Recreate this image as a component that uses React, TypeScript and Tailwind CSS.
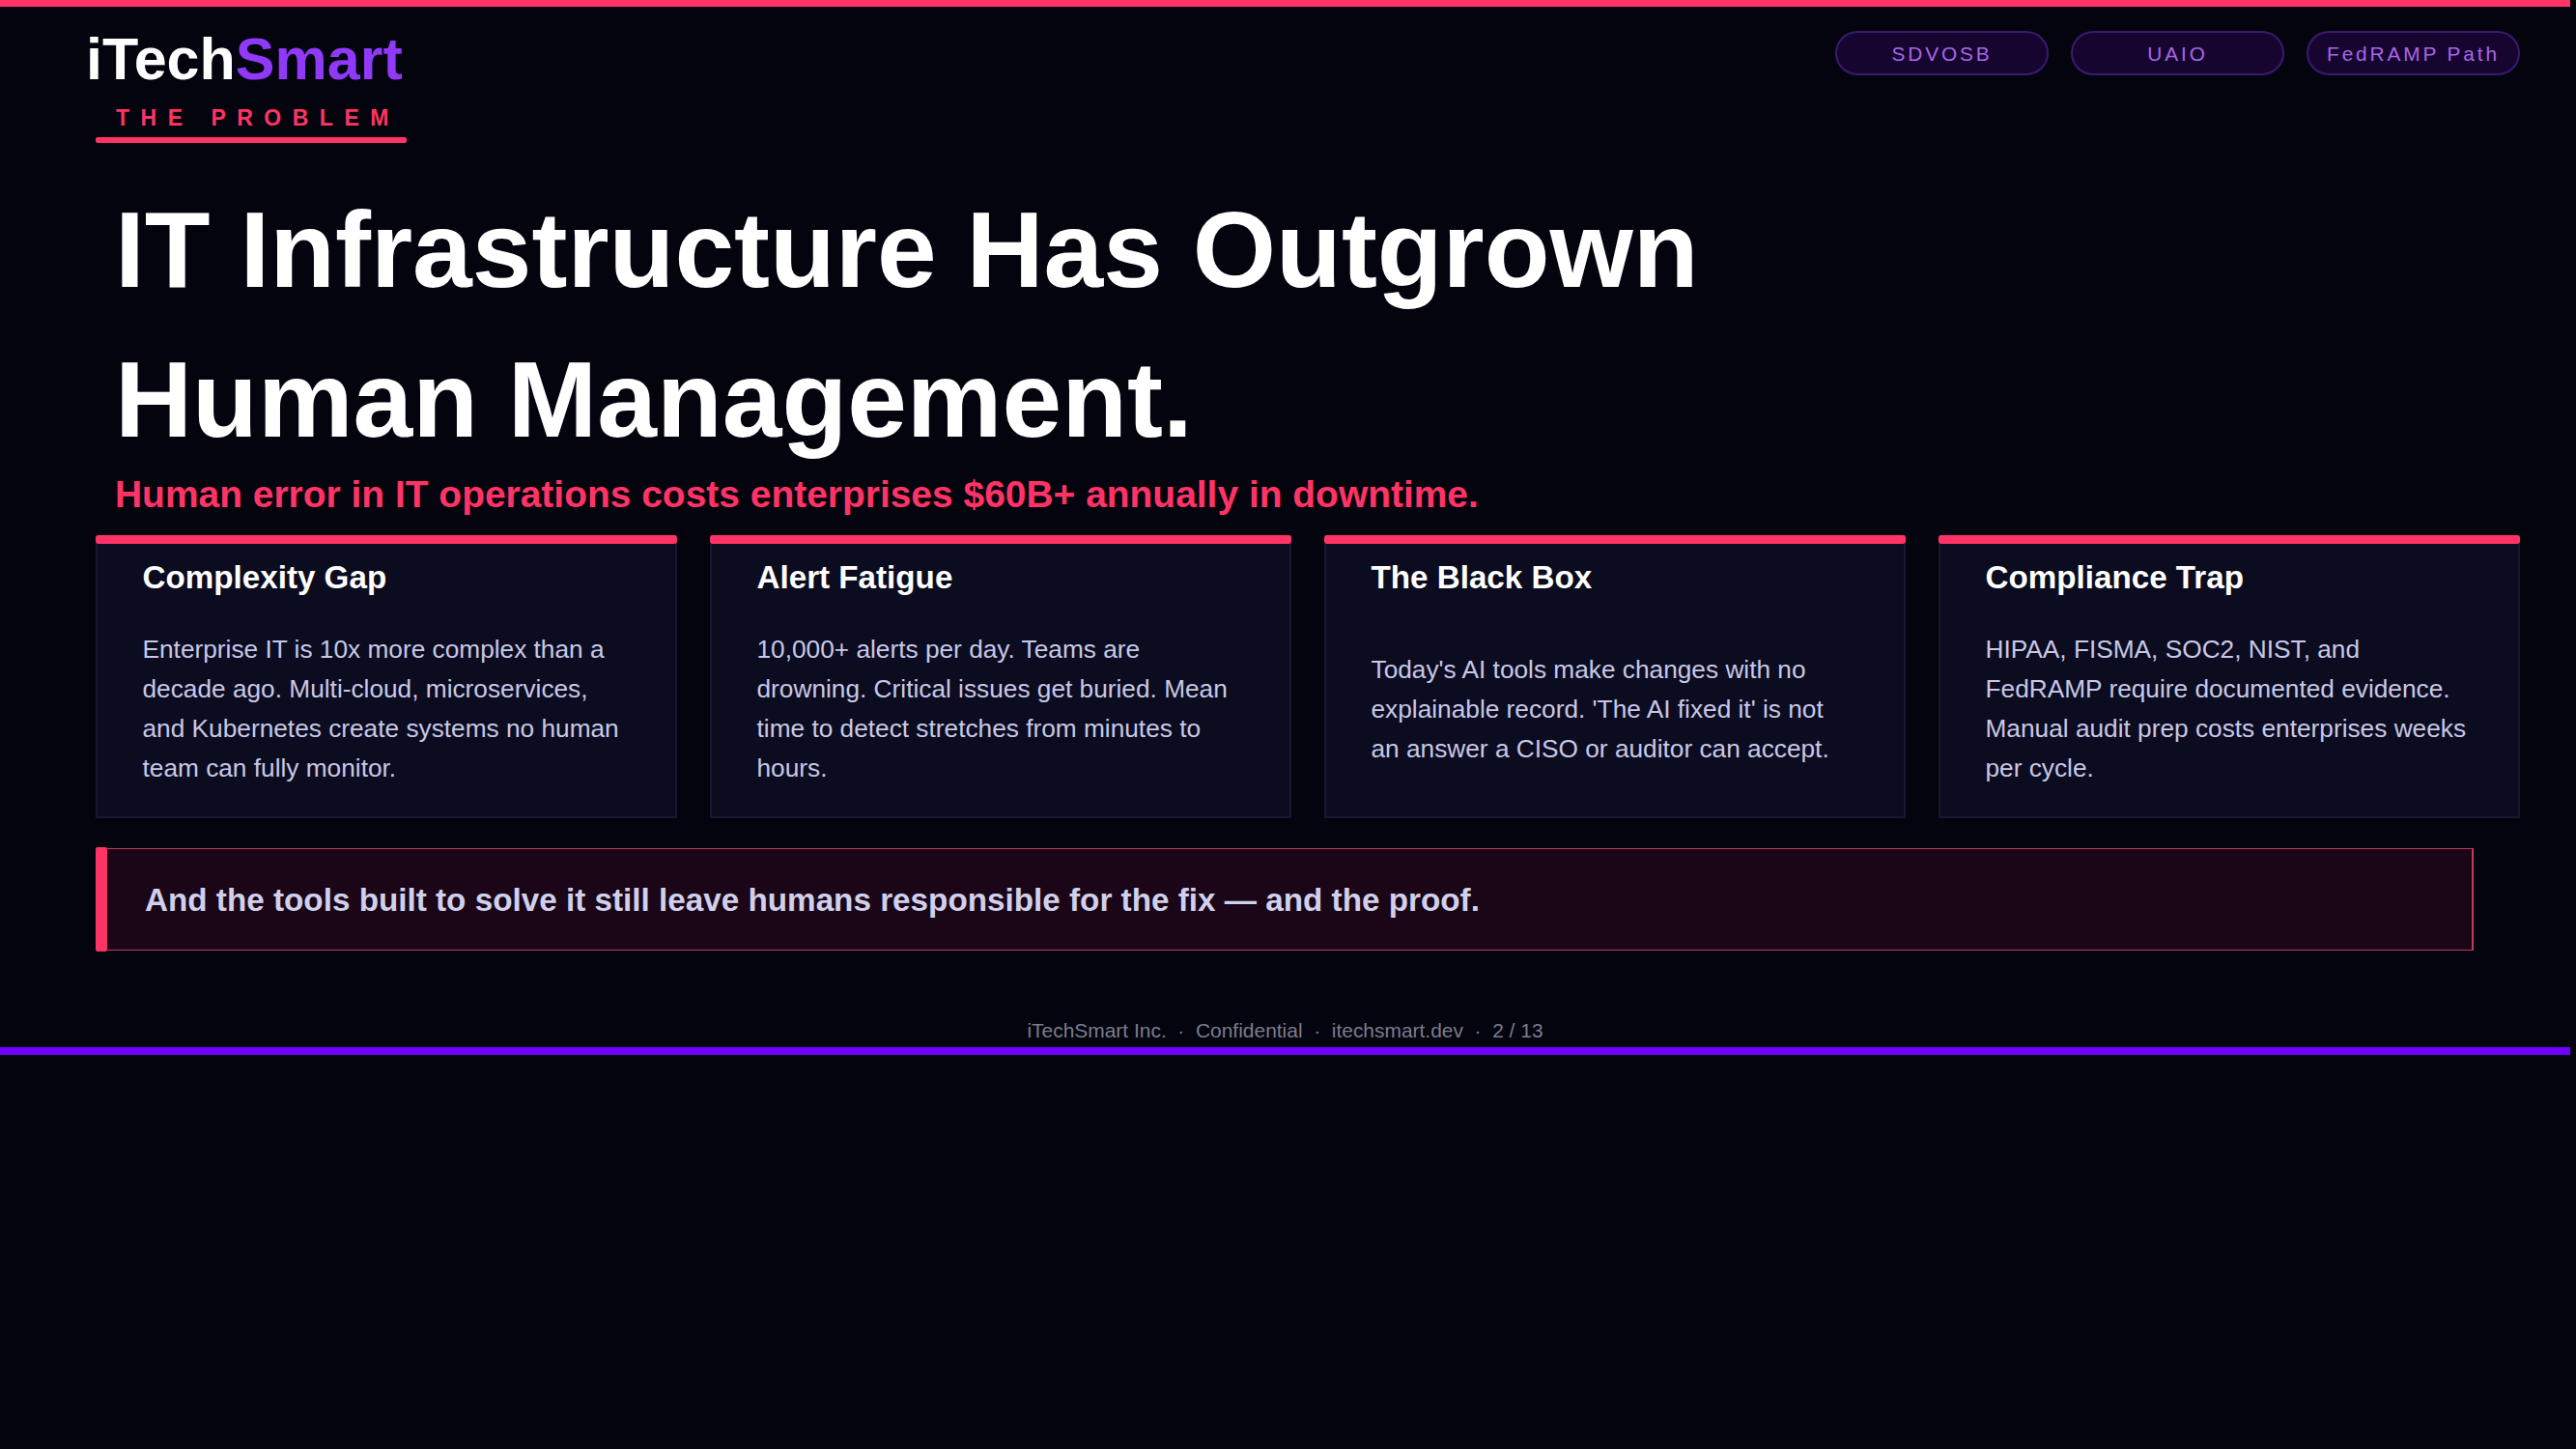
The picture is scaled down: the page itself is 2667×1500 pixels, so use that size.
const cards = [
  {
    title: "Complexity Gap",
    body: "Enterprise IT is 10x more complex than a decade ago. Multi-cloud, microservices, and Kubernetes create systems no human team can fully monitor.",
  },
  {
    title: "Alert Fatigue",
    body: "10,000+ alerts per day. Teams are drowning. Critical issues get buried. Mean time to detect stretches from minutes to hours.",
  },
  {
    title: "The Black Box",
    body: "Today's AI tools make changes with no explainable record. 'The AI fixed it' is not an answer a CISO or auditor can accept.",
  },
  {
    title: "Compliance Trap",
    body: "HIPAA, FISMA, SOC2, NIST, and FedRAMP require documented evidence. Manual audit prep costs enterprises weeks per cycle.",
  },
];

const chips = ["SDVOSB", "UAIO", "FedRAMP Path"];

const App = () => {
  return (
    <div className="min-h-screen w-full bg-[#03040e] font-['Liberation_Sans',Arial,sans-serif]">
      <div className="flex w-[2661px] flex-col">
        <div className="h-[7px] bg-[#ff3366]" />

        <header className="flex items-start justify-between pl-[89px] pr-[52px]">
          <div>
            <div className="mt-[20px] text-[61px] font-bold leading-[69px] text-white">
              iTech<span className="text-[#9039f8]">Smart</span>
            </div>
            <div className="ml-[10px] mt-[13px] w-[322px]">
              <div className="pl-[21px] text-[23px] font-bold leading-[27px] tracking-[11.5px] text-[#ff3366] whitespace-nowrap">
                THE PROBLEM
              </div>
              <div className="mt-[6px] h-[6px] rounded-[2px] bg-[#ff3366]" />
            </div>
          </div>
          <div className="mt-[25px] flex gap-[23px]">
            {chips.map((c) => (
              <div
                key={c}
                className="flex h-[46px] w-[221px] items-center justify-center rounded-[23px] border-2 border-[#3a1a70] bg-[#16062f] pt-[1px] text-[20.8px] tracking-[2.9px] text-[#a866e6]"
              >
                {c}
              </div>
            ))}
          </div>
        </header>

        <main className="pl-[99px] pr-[52px]">
          <h1 className="mt-[34px] pl-[20px] text-[110.95px] font-bold leading-[155px] text-white">
            IT Infrastructure Has Outgrown
            <br />
            Human Management.
          </h1>
          <p className="-mt-[3px] pl-[20px] text-[38.95px] font-bold leading-[45px] text-[#ff3366]">
            Human error in IT operations costs enterprises $60B+ annually in downtime.
          </p>

          <div className="mt-[20px] grid grid-cols-4 gap-[34px]">
            {cards.map((c) => (
              <div key={c.title} className="flex flex-col border-2 border-t-0 border-[#171730] bg-[#0b0c20]">
                <div className="-mx-[2px] h-[9px] rounded-[3px] bg-[#ff3366]" />
                <div className="flex flex-1 flex-col pb-[29px] pl-[46.5px] pr-[50px] pt-[16px]">
                  <h3 className="text-[33.2px] font-bold leading-[38px] text-white">{c.title}</h3>
                  <div className="mt-[35px] flex flex-1 items-center">
                    <p className="text-[26.25px] leading-[41px] text-[#c8c8e6]">{c.body}</p>
                  </div>
                </div>
              </div>
            ))}
          </div>

          <div className="mt-[30px] flex h-[108px] w-[2462px]">
            <div className="w-[12px] rounded-[2px] bg-[#ff3366]" />
            <div className="my-[1px] flex flex-1 items-center border-y-[1.5px] border-r-2 border-[#c43a5e] bg-[#1a0616] pl-[39px] pt-[2px]">
              <p className="text-[33.25px] font-bold text-[#d0d0ec]">
                And the tools built to solve it still leave humans responsible for the fix — and the proof.
              </p>
            </div>
          </div>
        </main>

        <footer className="mt-[70px] text-center text-[20.95px] leading-[24px] text-[#7c7c8c]">
          iTechSmart Inc. &nbsp;·&nbsp; Confidential &nbsp;·&nbsp; itechsmart.dev &nbsp;·&nbsp; 2 / 13
        </footer>
        <div className="mt-[5px] h-[8px] bg-[#6f00ff]" />
      </div>
    </div>
  );
};

export default App;
